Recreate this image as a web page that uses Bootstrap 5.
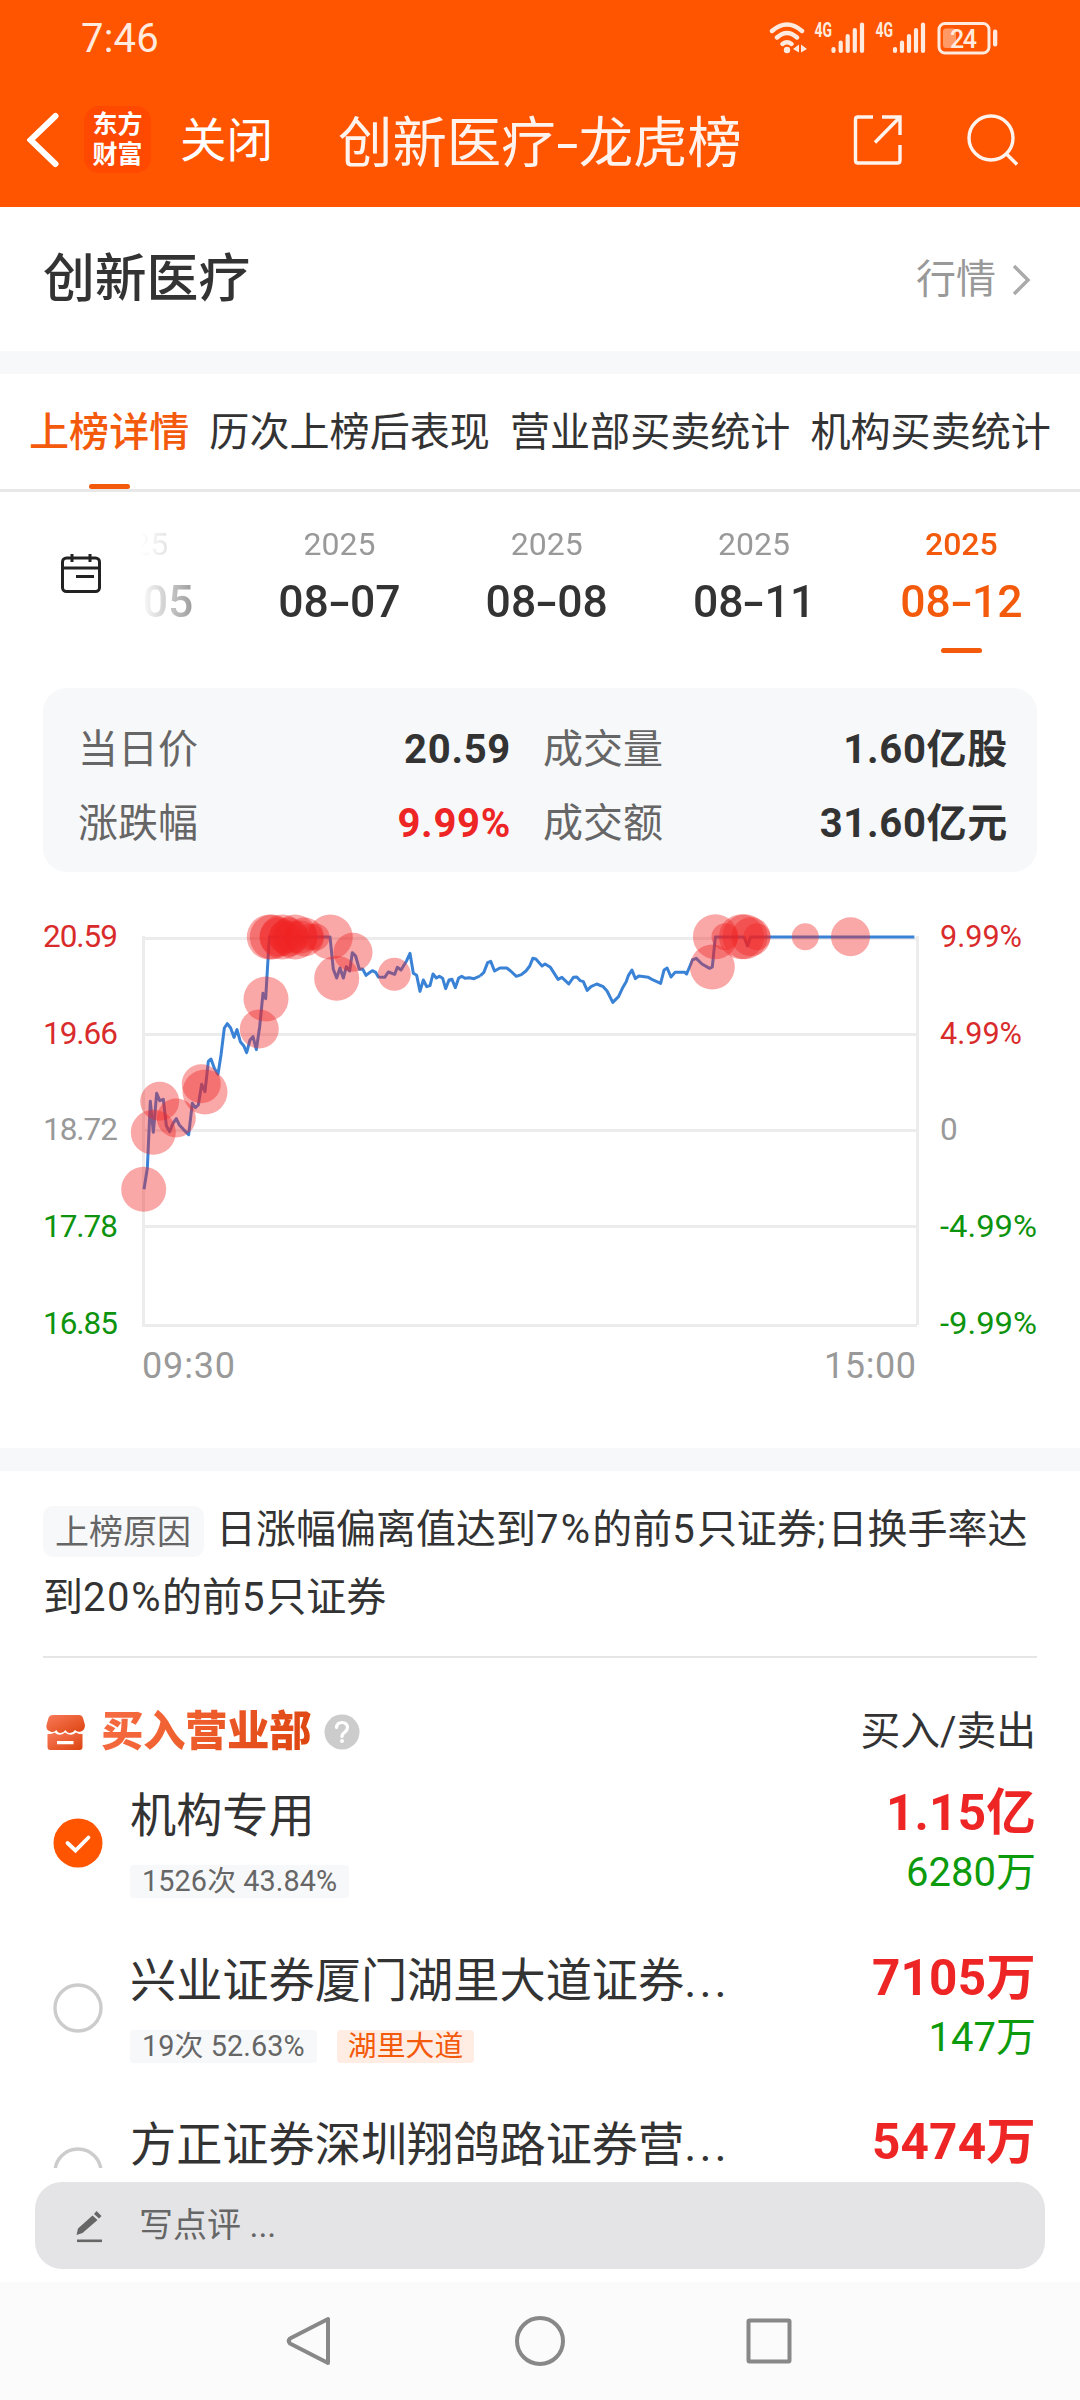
<!DOCTYPE html>
<html lang="zh-CN">
<head>
<meta charset="utf-8">
<meta name="viewport" content="width=device-width, initial-scale=1">
<title>创新医疗-龙虎榜</title>
<link href="https://cdn.jsdelivr.net/npm/bootstrap@5.3.0/dist/css/bootstrap.min.css" rel="stylesheet">
<style>
:root{--brand:#ff5500;--accent:#f35a0c;--ink:#333;--up:#ee2525;--down:#0d9b0d;--band:#f7f8fa}
body{font-family:Roboto,"Noto Sans CJK SC",sans-serif;color:var(--ink);width:1080px;height:2400px;overflow:hidden;background:#fff;font-size:40px;line-height:1}
svg{display:block;flex:none}
.one{white-space:nowrap}
.top-area{background:var(--brand);height:207px;color:#fff}
.status{height:72px;padding:5px 82px 0 81px;color:#ffeadf}
.clock{font-size:40px;letter-spacing:.2px}
.nav-row{height:135px;padding:0 62px 0 27px}
.app-logo{width:67px;height:67px;border-radius:15px;background:#ff4800;font-size:25px;font-weight:700;line-height:30px;margin-left:25px;padding-top:4px}
.closer{font-size:46.5px;margin-left:29px;width:94px;padding-top:4px}
.page-title{font-size:54.4px;margin:0 0 0 64px;padding-top:9px;width:410px;color:#fff3ee}
.dash{display:inline-block;transform:scaleX(1.45);margin:0 4px}
.stock-row{height:144px;padding:2px 49px 0 43px}
.stock-name{font-size:51.8px;font-weight:500}
.quote{color:#999}
.band{height:23px;background:var(--band)}
.tabs{height:118px;border-bottom:3px solid #e8e8e8;padding:0 29px;gap:20px}
.tabs .tab{height:115px;display:flex;align-items:center;position:relative;white-space:nowrap;padding-top:3px;font-size:40.1px}
.tabs .on,.dates .on{color:var(--accent);font-weight:500}
.tabs .on::after,.dates .on::after{content:"";position:absolute;bottom:0;left:50%;width:41px;height:5px;margin-left:-20px;border-radius:3px;background:var(--accent)}
.dates{height:196px}
.cal{width:140px;padding:61px 0 0 60px}
.strip{width:940px;overflow:hidden;justify-content:flex-end;padding-right:15px;-webkit-mask-image:linear-gradient(90deg,transparent 0,#000 110px);mask-image:linear-gradient(90deg,transparent 0,#000 110px)}
.day{width:207.3px;flex:none;height:161px;position:relative;text-align:center;padding-top:36px}
.day .yr{font-size:32px;line-height:32px;color:#999}
.day .md{font-size:44.5px;line-height:44px;font-weight:500;margin-top:20px}
.day .md i{font-style:normal;display:inline-block;transform:scaleX(1.5);margin:0 3px}
.day.on .yr{color:var(--accent)}
.summary{margin:0 43px;height:184px;border-radius:24px;background:var(--band);padding:25px 30px 11px 35px}
.summary .line{height:74px}
.summary .k{color:#666}
.summary .v{font-weight:700;letter-spacing:.7px;margin-right:-1px}
.summary .colA{width:432px}.summary .colB{width:464px}
.red{color:var(--up)}.green{color:var(--down)}
.chart{height:576px}
.reason{padding:25px 43px 0;height:185px;line-height:68px;white-space:nowrap}
.reason .why{display:inline-block;background:var(--band);color:#666;font-size:34px;line-height:52px;height:51px;border-radius:10px;padding:0 12px;width:161px;margin-right:12px;vertical-align:-1px}
.reason b{font-weight:400;letter-spacing:1.6px}
.reason .pct{letter-spacing:2.2px}
.rule{height:2px;background:#e6e6e6;margin:0 43px}
.dept-head{height:113px;padding:44px 44px 0 45px}
.dept-title{font-size:42.5px;font-weight:900;line-height:60px;background:linear-gradient(120deg,#f66c45,#f0602f 40%,#dc430e);-webkit-background-clip:text;background-clip:text;color:transparent;margin-left:15px;letter-spacing:-.5px}
.help{margin-left:13px}
.col-cap{font-size:39.8px}
.search{margin-left:64px}
.viewport{height:397px;overflow:hidden}
.dept{height:164.5px;padding:0 44px 0 53px}
.dept .pick{margin-top:47px}
.dept .info{margin-left:27px;width:620px}
.dept .nm{font-size:46.2px;line-height:50px;margin-top:20px;white-space:nowrap}
.dept .nm i{font-style:normal;letter-spacing:3px}
.chip{display:inline-flex;align-items:center;height:33px;border-radius:4px;background:var(--band);color:#666;font-size:28.8px;padding:0 12px;white-space:nowrap;letter-spacing:.1px}
.chip.hot{background:#ffede4;color:var(--accent);margin-left:20px;padding:0 11px}
.chips{margin-top:24px;display:flex}
.buy{font-size:49.5px;line-height:50px;font-weight:700;color:var(--up);margin-top:17px;letter-spacing:.2px}
.sell{line-height:42px;margin-top:14px;color:var(--down)}
.comment{margin:14px 35px 0;height:87px;border-radius:27px;background:#e4e4e6;color:#666;font-size:34px;padding-left:41px}
.comment .hint{margin-left:33px;margin-top:-1px}
.sysbar{height:118px;background:#fbfbfb;margin-top:13px}
</style>
<script src="https://cdn.jsdelivr.net/npm/bootstrap@5.3.0/dist/js/bootstrap.bundle.min.js"></script>
</head>
<body>
<header class="top-area">
  <div class="status d-flex align-items-center justify-content-between">
    <span class="clock">7:46</span>
    <svg width="230" height="46" viewBox="769 14.500 230 46" fill="none" stroke="#ffeadf">
      <g stroke-width="4.4" stroke-linecap="round"><path d="M773 29.500Q788 16.500 803 29.500M778 36Q788 27 798 36M783.500 42.500Q788 39 792.500 42.500"/></g>
      <circle cx="788" cy="48.500" r="3.200" fill="#ffeadf" stroke="none"/>
      <path d="M800 43v8l-6-3.500zM802 43v8l6-3.500z" fill="#ffeadf" stroke="none"/>
      <g fill="#ffeadf" stroke="none" font-size="19.500" font-weight="700"><text x="815.500" y="35" textLength="17.500" lengthAdjust="spacingAndGlyphs">4G</text><text x="876.500" y="35" textLength="17.500" lengthAdjust="spacingAndGlyphs">4G</text></g>
      <g stroke-width="4.200" stroke-linecap="round"><path d="M834.500 47.500v2M841.700 41v8.500M848.700 34.500v15M855.800 28.500v21M863 23v26.500"/><path d="M896 47.500v2M903 41v8.500M910 34.500v15M917 28.500v21M924 23v26.500"/></g>
      <rect x="940" y="22" width="50" height="29.500" rx="6" stroke-width="3"/>
      <rect x="944" y="27" width="13" height="19.500" rx="3" fill="#ff9966" stroke="none"/>
      <rect x="994" y="28" width="4.300" height="17" rx="2" fill="#ffeadf" stroke="none"/>
      <text x="951" y="46" font-size="25" font-weight="500" textLength="27" fill="#ffeadf" stroke="none">24</text>
    </svg>
  </div>
  <div class="nav-row d-flex align-items-center">
    <svg width="32" height="56" viewBox="27 112 32 56" fill="none" stroke="#fff" stroke-width="6" stroke-linecap="round"><path d="M55.500 116L30.500 140L55.500 164"/></svg>
    <div class="app-logo text-center">东方<br>财富</div>
    <div class="closer one">关闭</div>
    <h1 class="page-title one fw-normal">创新医疗<span class="dash">-</span>龙虎榜</h1>
    <svg class="ms-auto" width="50" height="52" viewBox="854 114 50 52" fill="none" stroke="#fff3ee" stroke-width="3.400"><path d="M874 117H859q-2.500 0-2.500 2.500v41q0 2.500 2.500 2.500h39.500q2.500 0 2.500-2.500V145M883 117h18v18M901 117l-25 25.500"/></svg>
    <svg class="search" width="51" height="53" viewBox="967 112 51 53" fill="none" stroke="#fff3ee" stroke-width="3.400"><circle cx="991" cy="137" r="22"/><path d="M1006 152.500l11 11"/></svg>
  </div>
</header>

<section class="stock-row d-flex align-items-center justify-content-between">
  <div class="stock-name">创新医疗</div>
  <a class="quote d-flex align-items-center text-decoration-none">行情
    <svg class="ms-3" width="19" height="32" fill="none" stroke="#aaa" stroke-width="3.500"><path d="M2 2l14 14-14 14"/></svg></a>
</section>
<div class="band"></div>

<nav class="tabs d-flex">
  <div class="tab on">上榜详情</div><div class="tab">历次上榜后表现</div><div class="tab">营业部买卖统计</div><div class="tab">机构买卖统计</div>
</nav>

<section class="dates d-flex">
  <div class="cal"><svg width="42" height="42" viewBox="60 553 42 42" fill="none" stroke="#222" stroke-width="3"><rect x="62.500" y="558" width="37" height="33.500" rx="4"/><path d="M63 568h37M72 554v8M90 554v8M76 576.500h18" /></svg></div>
  <div class="strip d-flex">
    <div class="day"><div class="yr">2025</div><div class="md">08<i>-</i>05</div></div>
    <div class="day"><div class="yr">2025</div><div class="md">08<i>-</i>07</div></div>
    <div class="day"><div class="yr">2025</div><div class="md">08<i>-</i>08</div></div>
    <div class="day"><div class="yr">2025</div><div class="md">08<i>-</i>11</div></div>
    <div class="day on"><div class="yr">2025</div><div class="md">08<i>-</i>12</div></div>
  </div>
</section>

<section class="summary">
  <div class="line d-flex align-items-center"><div class="colA d-flex justify-content-between"><span class="k">当日价</span><span class="v">20.59</span></div><div class="colB d-flex justify-content-between ms-auto"><span class="k">成交量</span><span class="v">1.60亿股</span></div></div>
  <div class="line d-flex align-items-center"><div class="colA d-flex justify-content-between"><span class="k">涨跌幅</span><span class="v red">9.99%</span></div><div class="colB d-flex justify-content-between ms-auto"><span class="k">成交额</span><span class="v">31.60亿元</span></div></div>
</section>

<section class="chart">
<svg width="1080" height="576" viewBox="0 872 1080 576" fill="none">
  <path d="M143.500 936V1327M917.500 936V1325M142 938.500H919M142 1034.500H919M142 1130.500H919M142 1226.500H919M142 1325.500H917" stroke="#ececec" stroke-width="3"/>
  <g stroke="#3a82d6" stroke-width="3" stroke-linejoin="round">
    <polyline vector-effect="non-scaling-stroke" transform="translate(0 890) scale(.33333)" points="432,898 442,835 451,634 460,727 470,610 479,632 490,628 499,707 509,725 519,700 529,686 538,705 550,718 566,734 577,640 586,653 595,645 605,583 615,605 625,514 633,507 643,535 654,553 663,495 673,414 682,401 692,414 702,442 711,419 721,455 731,467 740,488 750,450 759,440 769,479 779,410 789,310 797,326 808,141 990,141 1000,238 1010,264 1020,234 1030,264 1039,230 1049,243 1057,188 1067,198 1078,238 1088,237 1098,256 1117,242 1127,247 1135,261 1154,262 1165,246 1184,253 1192,232 1203,240 1220,212 1230,190 1240,250 1250,256 1260,304 1270,270 1280,290 1290,287 1299,252 1309,264 1318,259 1328,265 1337,296 1347,270 1356,268 1366,293 1376,264 1385,259 1395,265 1408,263 1422,266 1440,258"/>
    <polyline vector-effect="non-scaling-stroke" transform="translate(480 890) scale(.38270 .33333)" points="0,258 10,247 20,218 28,214 38,243 52,234 70,234 80,243 95,259 108,254 120,243 130,228 138,205 146,207 162,228 170,222 184,232 204,268 214,262 232,282 244,262 253,261 262,272 270,275 280,301 290,290 305,282 322,290 332,303 347,337 362,320 372,295 382,275 388,256 397,240 406,266 415,258 440,262 452,270 472,280 481,240 489,234 499,261 510,247 535,247 540,252 555,210 565,205 580,222 600,235 607,231 615,141 690,141 699,168 707,141 1135,141"/>
  </g>
  <g fill="#f12222" fill-opacity=".4">
    <circle cx="143.700" cy="1189.300" r="22.500"/><circle cx="153.300" cy="1132.300" r="22.500"/><circle cx="159.700" cy="1101.300" r="19.500"/><circle cx="176.300" cy="1118" r="19.500"/><circle cx="201.300" cy="1083.700" r="19.500"/><circle cx="205" cy="1092" r="22.500"/><circle cx="259.300" cy="1029" r="19.500"/><circle cx="266" cy="999" r="22.500"/>
    <circle cx="269.300" cy="937" r="22.500"/><circle cx="272.300" cy="937" r="22.500"/><circle cx="279" cy="937" r="19.500"/><circle cx="282.300" cy="937" r="22.500"/><circle cx="285" cy="937" r="16.500"/><circle cx="289" cy="937" r="19.500"/><circle cx="292" cy="937" r="16.500"/><circle cx="295" cy="937" r="22.500"/><circle cx="301" cy="937" r="16.500"/><circle cx="304.500" cy="937" r="19.500"/><circle cx="310" cy="937" r="13.500"/><circle cx="316" cy="937" r="13.500"/><circle cx="330.300" cy="937" r="22.500"/>
    <circle cx="336.700" cy="978.300" r="22.500"/><circle cx="353" cy="952.300" r="19.500"/><circle cx="394.300" cy="974.300" r="16.500"/>
    <circle cx="712.300" cy="967" r="22.500"/><circle cx="715.400" cy="936.700" r="22.500"/><circle cx="725" cy="936.700" r="13.500"/><circle cx="741.500" cy="936.700" r="22.500"/><circle cx="745" cy="936.700" r="22.500"/><circle cx="751" cy="936.700" r="19.500"/><circle cx="757" cy="936.700" r="13.500"/><circle cx="805.300" cy="936.700" r="13.500"/><circle cx="850.500" cy="936.700" r="19.500"/>
  </g>
  <g font-size="31.500">
    <g fill="#d92b2b"><text x="43" y="947" textLength="75">20.59</text><text x="43" y="1044" textLength="75">19.66</text><text x="940" y="947" textLength="82" lengthAdjust="spacingAndGlyphs">9.99%</text><text x="940" y="1044" textLength="82" lengthAdjust="spacingAndGlyphs">4.99%</text></g>
    <g fill="#999"><text x="43" y="1140" textLength="75">18.72</text><text x="940" y="1140">0</text></g>
    <g fill="#0d930d"><text x="43" y="1237" textLength="75">17.78</text><text x="43" y="1334" textLength="75">16.85</text><text x="940" y="1237" textLength="97" lengthAdjust="spacingAndGlyphs">-4.99%</text><text x="940" y="1334" textLength="97" lengthAdjust="spacingAndGlyphs">-9.99%</text></g>
  </g>
  <g font-size="36" fill="#999"><text x="142" y="1378" textLength="93">09:30</text><text x="824" y="1378" textLength="92">15:00</text></g>
</svg>
</section>
<div class="band"></div>

<section class="reason"><span class="why">上榜原因</span>日涨幅偏离值达到<b class="pct">7%</b>的前<b class="pct">5</b>只证券<b class="pct">;</b>日换手率达<br>到<b>20%</b>的前<b>5</b>只证券</section>
<div class="rule"></div>

<section>
  <div class="dept-head d-flex align-items-start">
    <div class="d-flex align-items-center w-100">
    <svg width="41" height="37" viewBox="46 1713 41 37"><defs><linearGradient id="g" x1="0" y1="0" x2="1" y2="1"><stop offset="0" stop-color="#f97a5a"/><stop offset="1" stop-color="#dc430e"/></linearGradient></defs>
      <path fill="url(#g)" d="M53 1714H80q3 0 4 3l2 7q0 5-4 6.500-4 1-6-1.500-2 3-5 3t-4.500-3q-2 3-5 3t-4-3q-3 3-6 1.500-5-1.500-4-6.500l2-7q1-3 4.500-3z"/>
      <path fill="url(#g)" fill-rule="evenodd" d="M48.500 1733q4 .5 7-1.500 5 4.500 10.500 0 6 4.500 11 0 3 2 6.500 1.500V1746q0 3-3 3H51.500q-3 0-3-3zM58 1740v3.200h16.500V1740z"/></svg>
    <div class="dept-title one">买入营业部</div>
    <svg class="help" width="36" height="36" viewBox="-18 -18 36 36"><circle r="17.500" fill="#ccc"/><path d="M-5.500-4.500Q-5-9.500 0-9.500T5.500-4.500Q5.500-2 2.500.5 0 2 0 4.500" fill="none" stroke="#fff" stroke-width="3.200" stroke-linecap="round"/><circle cy="9" r="2" fill="#fff"/></svg>
    <div class="ms-auto one col-cap">买入/卖出</div>
    </div>
  </div>
  <div class="viewport">
    <div class="dept d-flex"><svg class="pick" width="50" height="50" viewBox="-25 -25 50 50"><circle r="24.500" fill="#ff5500"/><path d="M-10.500 0l8 7.500L10.500-5.500" fill="none" stroke="#fff" stroke-width="3.800" stroke-linecap="round"/></svg>
      <div class="info"><div class="nm">机构专用</div><div class="chips"><span class="chip">1526次 43.84%</span></div></div>
      <div class="ms-auto text-end"><div class="buy">1.15亿</div><div class="sell">6280万</div></div></div>
    <div class="dept d-flex"><svg class="pick" width="50" height="50" viewBox="-25 -25 50 50"><circle r="23" fill="none" stroke="#ccc" stroke-width="3.400"/></svg>
      <div class="info"><div class="nm">兴业证券厦门湖里大道证券<i>...</i></div><div class="chips"><span class="chip">19次 52.63%</span><span class="chip hot">湖里大道</span></div></div>
      <div class="ms-auto text-end"><div class="buy">7105万</div><div class="sell">147万</div></div></div>
    <div class="dept d-flex"><svg class="pick" width="50" height="50" viewBox="-25 -25 50 50"><circle r="23" fill="none" stroke="#ccc" stroke-width="3.400"/></svg>
      <div class="info"><div class="nm">方正证券深圳翔鸽路证券营<i>...</i></div></div>
      <div class="ms-auto text-end"><div class="buy">5474万</div></div></div>
  </div>
</section>

<div class="comment d-flex align-items-center">
  <svg width="30" height="34" viewBox="76 2208 30 34" fill="#666"><path d="M92.500 2214.500l5 4.500L82.500 2232l-6 2 1.500-6.500zM94 2213l2.500-3 5 5-2.500 2.500z"/><rect x="77" y="2238.500" width="25" height="2.600"/></svg>
  <span class="one hint">写点评 ...</span>
</div>
<footer class="sysbar">
  <svg width="1080" height="118" viewBox="0 2282 1080 118" fill="none" stroke="#888" stroke-width="4" stroke-linejoin="round"><path d="M328 2319V2363L290 2343.500Q287.500 2341 290 2338.500z"/><circle cx="540" cy="2341" r="23"/><rect x="748.500" y="2320.500" width="41" height="41" rx="1"/></svg>
</footer>
</body>
</html>
